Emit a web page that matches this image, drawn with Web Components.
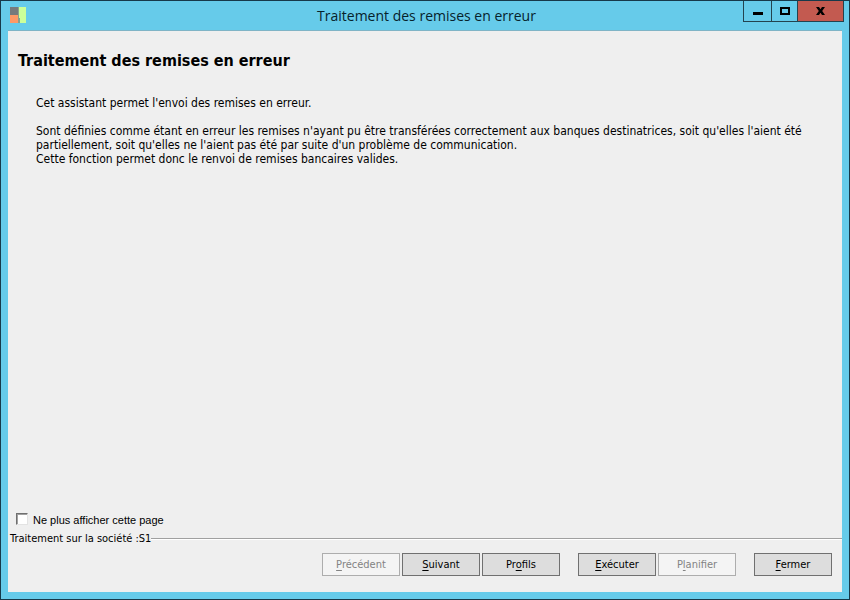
<!DOCTYPE html>
<html lang="fr">
<head>
<meta charset="utf-8">
<title>Traitement des remises en erreur</title>
<style>
    body {
        margin: 0;
        background: #66cbea;
        color: #000;
        font: 12px/14px "DejaVu Sans Condensed", "DejaVu Sans", sans-serif;
    }
</style>
</head>
<body>
<wizard-window header="Traitement des remises en erreur">
    <wizard-page header="Traitement des remises en erreur">
        <p>Cet assistant permet l'envoi des remises en erreur.</p>
        <p>Sont définies comme étant en erreur les remises n'ayant pu être transférées correctement aux banques destinatrices, soit qu'elles l'aient été partiellement, soit qu'elles ne l'aient pas été par suite d'un problème de communication.<br>Cette fonction permet donc le renvoi de remises bancaires valides.</p>
    </wizard-page>
    <wizard-check>Ne plus afficher cette page</wizard-check>
    <wizard-separator>Traitement sur la société :S1</wizard-separator>
    <wizard-actions>
        <wizard-group>
            <wizard-button label="Précédent" key="P" disabled></wizard-button>
            <wizard-button label="Suivant" key="S"></wizard-button>
            <wizard-button label="Profils" key="o"></wizard-button>
        </wizard-group>
        <wizard-group>
            <wizard-button label="Exécuter" key="E"></wizard-button>
            <wizard-button label="Planifier" key="l" disabled></wizard-button>
        </wizard-group>
        <wizard-group>
            <wizard-button label="Fermer" key="F"></wizard-button>
        </wizard-group>
    </wizard-actions>
</wizard-window>

<script>
class WizardTitlebar extends HTMLElement {
    connectedCallback() {
        this.attachShadow({ mode: 'open' }).innerHTML = `
            <style>
                :host {
                    display: grid;
                    grid-template-columns: 1fr auto 1fr;
                    height: 29px;
                    padding: 0 5px 0 8px;
                }

                .logo {
                    margin-top: 6px;
                }

                .title {
                    font: 14px/20px "Open Sans", "Noto Sans", sans-serif;
                    color: #06222c;
                    margin-top: 5px;
                }

                .controls {
                    display: flex;
                    justify-self: end;
                    align-self: start;
                    border: 1px solid #23434f;
                    border-top: none;
                }

                button {
                    display: flex;
                    align-items: center;
                    justify-content: center;
                    width: 28px;
                    height: 20px;
                    padding: 0;
                    border: none;
                    border-right: 1px solid #23434f;
                    background: #66cbea;
                }

                button.maximize {
                    width: 26px;
                }

                button.close {
                    width: 45px;
                    border-right: none;
                    background: #c35a50;
                }
            </style>

            <svg class="logo" width="18" height="17" aria-hidden="true">
                <rect x="1" y="0" width="8" height="8" fill="#777a7c"/>
                <rect x="1" y="8" width="8" height="8" fill="#ff9966"/>
                <path d="M9 0h1v11h1v5H9z" fill="#8ba08c"/>
                <path d="M10 0h7v16h-6v-5h-1z" fill="#ccff99"/>
            </svg>
            <span class="title">${this.getAttribute('header')}</span>
            <div class="controls">
                <button class="minimize" aria-label="Réduire">
                    <svg width="10" height="10"><path d="M0 6h10v3H0z"/></svg>
                </button>
                <button class="maximize" aria-label="Agrandir">
                    <svg width="10" height="8"><path d="M1 1h8v6H1z" fill="none" stroke="#000" stroke-width="2"/></svg>
                </button>
                <button class="close" aria-label="Fermer la fenêtre">
                    <svg width="9" height="8"><path d="M0 0h3l1.500 2.200L6 0h3L6.200 4 9 8H6L4.500 5.800 3 8H0l2.800-4z"/></svg>
                </button>
            </div>
        `;
    }
}

class WizardWindow extends HTMLElement {
    connectedCallback() {
        this.attachShadow({ mode: 'open' }).innerHTML = `
            <style>
                :host {
                    display: flex;
                    flex-direction: column;
                    box-sizing: border-box;
                    min-height: 100vh;
                    border: 1px solid #17394a;
                    background: #66cbea;
                }

                main {
                    flex: 1;
                    display: flex;
                    flex-direction: column;
                    margin: 0 7px 7px;
                    border-top: 1px solid #7fb4c6;
                    background: #efefef;
                }
            </style>

            <wizard-titlebar header="${this.getAttribute('header')}"></wizard-titlebar>
            <main><slot></slot></main>
        `;
    }
}

class WizardPage extends HTMLElement {
    connectedCallback() {
        this.attachShadow({ mode: 'open' }).innerHTML = `
            <style>
                :host {
                    display: block;
                    flex: 1;
                    padding: 20px 10px;
                }

                h1 {
                    margin: 0 0 25px;
                    font-size: 16px;
                    line-height: 20px;
                }

                .text {
                    display: flex;
                    flex-direction: column;
                    gap: 14px;
                    padding: 0 18px;
                }

                ::slotted(p) {
                    margin: 0;
                }
            </style>

            <h1>${this.getAttribute('header')}</h1>
            <div class="text"><slot></slot></div>
        `;
    }
}

class WizardCheck extends HTMLElement {
    connectedCallback() {
        this.attachShadow({ mode: 'open' }).innerHTML = `
            <style>
                :host {
                    display: flex;
                    padding: 0 8px;
                    font: 11px/14px "Liberation Sans", Arial, sans-serif;
                }

                label {
                    display: flex;
                    align-items: center;
                    gap: 5px;
                }

                input {
                    appearance: none;
                    width: 12px;
                    height: 12px;
                    margin: 0 0 2px;
                    border: 1px solid;
                    border-color: #6f6f6f #e3e3e3 #e3e3e3 #6f6f6f;
                    background: #fff;
                    box-shadow: inset 1px 1px #a0a0a0;
                }

                input:checked {
                    background: #333;
                }
            </style>

            <label><input type="checkbox"><slot></slot></label>
        `;
    }
}

class WizardSeparator extends HTMLElement {
    connectedCallback() {
        this.attachShadow({ mode: 'open' }).innerHTML = `
            <style>
                :host {
                    display: flex;
                    align-items: center;
                    padding: 5px 0 0 2px;
                    font-size: 11px;
                }

                .line {
                    flex: 1;
                    height: 1px;
                    background: #a0a0a0;
                    border-bottom: 1px solid #fff;
                }
            </style>

            <slot></slot>
            <span class="line"></span>
        `;
    }
}

class WizardActions extends HTMLElement {
    connectedCallback() {
        this.attachShadow({ mode: 'open' }).innerHTML = `
            <style>
                :host {
                    display: flex;
                    justify-content: flex-end;
                    gap: 18px;
                    padding: 7px 10px 16px;
                }
            </style>

            <slot></slot>
        `;
    }
}

class WizardGroup extends HTMLElement {
    connectedCallback() {
        this.attachShadow({ mode: 'open' }).innerHTML = `
            <style>
                :host {
                    display: flex;
                    gap: 2px;
                }
            </style>

            <slot></slot>
        `;
    }
}

class WizardButton extends HTMLElement {
    connectedCallback() {
        const label = this.getAttribute('label');
        const key = this.getAttribute('key');
        const disabled = this.hasAttribute('disabled') ? 'disabled' : '';

        this.attachShadow({ mode: 'open' }).innerHTML = `
            <style>
                :host {
                    display: block;
                }

                button {
                    width: 78px;
                    height: 23px;
                    padding: 0;
                    border: 1px solid #707070;
                    background: #dddddd;
                    color: #000;
                    font: inherit;
                    font-size: 11px;
                }

                button:disabled {
                    border-color: #adadad;
                    background: #f4f4f4;
                    color: #838383;
                }

                u {
                    text-underline-offset: 2px;
                }
            </style>

            <button type="button" accesskey="${key.toLowerCase()}" ${disabled}>${label.replace(key, `<u>${key}</u>`)}</button>
        `;
    }
}

customElements.define('wizard-titlebar', WizardTitlebar);
customElements.define('wizard-window', WizardWindow);
customElements.define('wizard-page', WizardPage);
customElements.define('wizard-check', WizardCheck);
customElements.define('wizard-separator', WizardSeparator);
customElements.define('wizard-actions', WizardActions);
customElements.define('wizard-group', WizardGroup);
customElements.define('wizard-button', WizardButton);
</script>
</body>
</html>
